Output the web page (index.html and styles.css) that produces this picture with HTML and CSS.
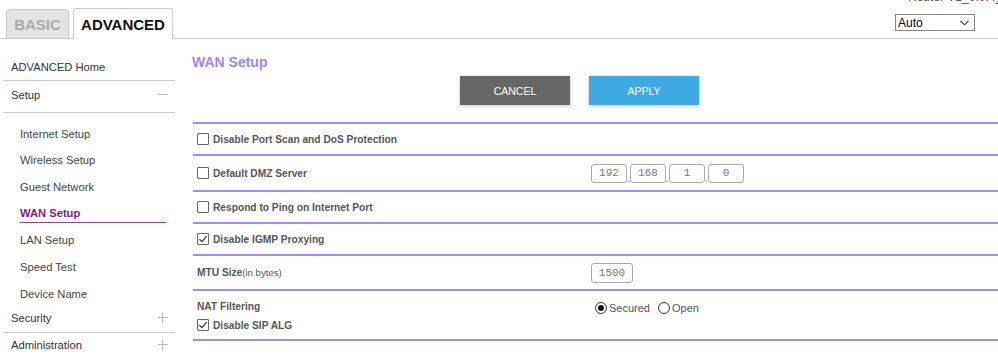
FILE: index.html
```html
<!DOCTYPE html>
<html lang="en">
<head>
    <meta charset="UTF-8">
    <title>WAN Setup</title>
    <link rel="stylesheet" href="styles.css">
</head>
<body>
    <header class="topbar">
        <nav class="tabs">
            <a href="#" class="tab tab-basic">BASIC</a>
            <a href="#" class="tab tab-advanced">ADVANCED</a>
        </nav>
        <div class="top-right">
            <div class="fw-version">Router V1_0.0.4_1.1</div>
            <div class="select-wrap">
                <select class="lang-select">
                    <option>Auto</option>
                </select>
                <svg class="chevron" width="9" height="6" viewBox="0 0 9 6"><path d="M0.5 0.8 L4.5 4.8 L8.5 0.8" fill="none" stroke="#333" stroke-width="1.1"/></svg>
            </div>
        </div>
    </header>

    <div class="layout">
        <aside class="sidebar">
            <div class="nav-item nav-home">ADVANCED Home</div>
            <div class="nav-item nav-open">Setup <span class="sign minus"></span></div>
            <ul class="sub-list">
                <li class="sub-item"><a href="#">Internet Setup</a></li>
                <li class="sub-item"><a href="#">Wireless Setup</a></li>
                <li class="sub-item"><a href="#">Guest Network</a></li>
                <li class="sub-item active"><a href="#">WAN Setup</a></li>
                <li class="sub-item"><a href="#">LAN Setup</a></li>
                <li class="sub-item"><a href="#">Speed Test</a></li>
                <li class="sub-item"><a href="#">Device Name</a></li>
            </ul>
            <div class="nav-item nav-security">Security <span class="sign plus"></span></div>
            <div class="nav-item nav-last">Administration <span class="sign plus"></span></div>
        </aside>

        <main class="content">
            <h1 class="page-title">WAN Setup</h1>
            <div class="actions">
                <button class="btn btn-cancel">CANCEL</button>
                <button class="btn btn-apply">APPLY</button>
            </div>

            <div class="form-table">
                <div class="form-row row-a">
                    <label class="field"><span class="check"></span>Disable Port Scan and DoS Protection</label>
                    <div></div>
                </div>
                <div class="form-row row-dmz">
                    <label class="field"><span class="check"></span>Default DMZ Server</label>
                    <div class="ip-group">
                        <input class="ip-box" type="text" value="192" readonly>
                        <span class="ip-dot">.</span>
                        <input class="ip-box" type="text" value="168" readonly>
                        <span class="ip-dot">.</span>
                        <input class="ip-box" type="text" value="1" readonly>
                        <span class="ip-dot">.</span>
                        <input class="ip-box" type="text" value="0" readonly>
                    </div>
                </div>
                <div class="form-row row-c">
                    <label class="field"><span class="check"></span>Respond to Ping on Internet Port</label>
                    <div></div>
                </div>
                <div class="form-row row-c">
                    <label class="field"><span class="check checked"><svg width="10" height="10" viewBox="0 0 10 10"><path d="M1.5 5.2 L4 7.6 L8.6 2.2" fill="none" stroke="#333" stroke-width="1.3"/></svg></span>Disable IGMP Proxying</label>
                    <div></div>
                </div>
                <div class="form-row row-b">
                    <div class="field"><b>MTU Size</b><span class="unit">(in bytes)</span></div>
                    <div><input class="mtu-box" type="text" value="1500" readonly></div>
                </div>
                <div class="form-row row-nat">
                    <div class="nat-labels">
                        <div class="field"><b>NAT Filtering</b></div>
                        <label class="field"><span class="check checked"><svg width="10" height="10" viewBox="0 0 10 10"><path d="M1.5 5.2 L4 7.6 L8.6 2.2" fill="none" stroke="#333" stroke-width="1.3"/></svg></span>Disable SIP ALG</label>
                    </div>
                    <div class="radio-group">
                        <span class="radio on"></span><span class="radio-text">Secured</span>
                        <span class="radio"></span><span class="radio-text">Open</span>
                    </div>
                </div>
            </div>
        </main>
    </div>
</body>
</html>
```

FILE: styles.css
```css
body {
    margin: 0;
    font-family: "Liberation Sans", Arial, sans-serif;
    background-color: #fff;
    color: #333;
    width: 998px;
    overflow: hidden;
}

.topbar {
    display: flex;
    justify-content: space-between;
    height: 38px;
    border-bottom: 1px solid #ccc;
}

.tabs {
    display: flex;
    align-items: flex-end;
    gap: 4px;
    padding-left: 6px;
}

.tab {
    box-sizing: border-box;
    display: flex;
    align-items: center;
    justify-content: center;
    font-size: 15px;
    font-weight: bold;
    text-decoration: none;
    border: 1px solid #ccc;
    border-bottom: none;
    border-radius: 4px 4px 0 0;
}

.tab-basic {
    width: 63px;
    height: 29px;
    background-color: #e4e4e4;
    color: #aaa;
}

.tab-advanced {
    width: 100px;
    height: 31px;
    margin-bottom: -1px;
    background-color: #fff;
    color: #111;
}

.top-right {
    display: flex;
    flex-direction: column;
    align-items: flex-start;
    padding-right: 23px;
}

.fw-version {
    margin: -10px -60px 0 13px;
    height: 14px;
    font-size: 12px;
    color: #555;
    white-space: nowrap;
}

.select-wrap {
    position: relative;
    margin-top: 10px;
}

.lang-select {
    display: block;
    width: 80px;
    height: 17px;
    padding: 0 2px;
    font-family: "Liberation Sans", Arial, sans-serif;
    font-size: 12px;
    color: #000;
    border: 1px solid #888;
    border-radius: 0;
    background-color: #fff;
    appearance: none;
    -webkit-appearance: none;
}

.chevron {
    position: absolute;
    right: 6px;
    top: 6px;
    pointer-events: none;
}

.layout {
    display: flex;
}

/* sidebar */
.sidebar {
    width: 172px;
    margin-left: 3px;
    font-size: 11.2px;
    color: #333;
}

.nav-item {
    display: flex;
    align-items: center;
    justify-content: space-between;
    padding: 0 7px 0 8px;
    border-bottom: 1px solid #ccc;
}

.nav-home {
    margin-top: 14px;
    height: 27px;
}

.nav-open {
    box-sizing: border-box;
    height: 32px;
    padding-bottom: 3px;
}

.nav-security {
    box-sizing: border-box;
    height: 25px;
    padding-bottom: 3px;
}

.nav-last {
    height: 24px;
    border-bottom: none;
}

.sign {
    position: relative;
    width: 10px;
    height: 10px;
}

.sign::before,
.plus::after {
    content: "";
    position: absolute;
    background-color: #bbb;
}

.sign::before {
    left: 0;
    top: 4px;
    width: 10px;
    height: 1px;
}

.plus::after {
    left: 4px;
    top: 0;
    width: 1px;
    height: 10px;
}

.sub-list {
    list-style: none;
    margin: 0;
    padding: 8px 0 0 0;
}

.sub-item {
    display: flex;
    align-items: center;
    height: 26.67px;
    padding-left: 17px;
}

.sub-item a {
    color: #444;
    text-decoration: none;
    line-height: 15px;
}

.sub-item.active a {
    flex: 1;
    margin-right: 9px;
    padding-bottom: 1px;
    font-weight: bold;
    color: #7b2083;
    border-bottom: 1px solid #a43ca8;
}

/* main content */
.content {
    flex: 1;
    margin-left: 18px;
}

.page-title {
    margin: 15px 0 0 -1px;
    font-size: 14px;
    line-height: 16px;
    color: #9c86f4;
}

.actions {
    display: flex;
    gap: 19px;
    margin-top: 6px;
    padding-left: 267px;
}

.btn {
    width: 110px;
    height: 29px;
    border: none;
    font-family: "Liberation Sans", Arial, sans-serif;
    font-size: 10.5px;
    color: #fff;
    cursor: pointer;
    box-shadow: 0 1px 4px rgba(0, 0, 0, 0.25);
}

.btn-cancel {
    background-color: #666;
}

.btn-apply {
    background-color: #3fa9e4;
}

.form-table {
    margin-top: 17px;
    border-top: 2px solid #9d8ef3;
}

.form-row {
    display: grid;
    grid-template-columns: 398px 1fr;
    align-items: center;
    border-bottom: 2px solid #9d8ef3;
}

.row-a {
    height: 30px;
}

.row-dmz {
    height: 34px;
}

.row-b {
    height: 33px;
}

.row-c {
    height: 30px;
}

.row-nat {
    height: 48px;
    align-items: start;
}

.field {
    display: flex;
    align-items: center;
    padding-left: 4px;
    font-size: 10.2px;
    font-weight: bold;
    color: #555;
}

.unit {
    font-size: 9.6px;
    font-weight: normal;
}

.check {
    box-sizing: border-box;
    display: inline-flex;
    align-items: center;
    justify-content: center;
    width: 12px;
    height: 12px;
    margin-right: 4px;
    border: 1px solid #666;
    border-radius: 1px;
    background-color: #fff;
}

.nat-labels {
    display: flex;
    flex-direction: column;
    gap: 7px;
    padding-top: 10px;
}

.ip-group {
    display: flex;
    align-items: flex-end;
}

.ip-box,
.mtu-box {
    box-sizing: border-box;
    height: 19px;
    padding: 0;
    border: 1px solid #aaa;
    border-radius: 3px;
    font-family: "Liberation Mono", "Courier New", monospace;
    font-size: 11px;
    color: #777;
    text-align: center;
    background-color: #fff;
}

.ip-box {
    width: 36px;
}

.mtu-box {
    width: 42px;
    height: 20px;
}

.ip-dot {
    width: 3px;
    font-size: 10px;
    color: #666;
    line-height: 8px;
    text-align: center;
}

.radio-group {
    display: flex;
    align-items: center;
    padding-top: 11px;
    padding-left: 4px;
    font-size: 11px;
    color: #555;
}

.radio {
    box-sizing: border-box;
    display: inline-flex;
    align-items: center;
    justify-content: center;
    width: 12px;
    height: 12px;
    border: 1px solid #333;
    border-radius: 50%;
}

.radio.on::after {
    content: "";
    width: 6px;
    height: 6px;
    border-radius: 50%;
    background-color: #111;
}

.radio-text {
    margin: 0 8px 0 2px;
}
```
